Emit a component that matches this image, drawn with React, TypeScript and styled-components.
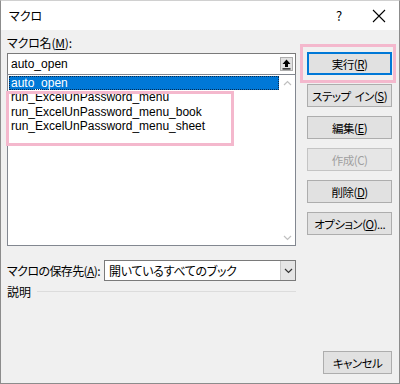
import React from "react";
import styled, { createGlobalStyle } from "styled-components";

const Global = createGlobalStyle`
  html, body { margin: 0; padding: 0; background: #f0f0f0; }
  body {
    font-family: "Noto Sans CJK JP", "Noto Sans", sans-serif;
    font-size: 12px;
    color: #000;
    font-feature-settings: "palt";
    white-space: nowrap;
  }
  * { box-sizing: border-box; }
`;

const Window = styled.div`
  width: 400px;
  height: 384px;
  border: 1px solid #8c8c8c;
  border-top-color: #d0d0d0;
  background: #f0f0f0;
  display: flex;
  flex-direction: column;
`;

const TitleBar = styled.div`
  height: 29px;
  background: #fff;
  display: flex;
  align-items: center;
  padding-left: 8px;
`;

const Title = styled.div`
  flex: 1;
  font-size: 12px;
`;

const Ctl = styled.div`
  width: 40px;
  height: 29px;
  display: flex;
  align-items: center;
  justify-content: center;
  font-size: 13px;
`;

const Body = styled.div`
  flex: 1;
  display: flex;
  padding: 5px 7px 9px 6px;
  gap: 11px;
`;

const Left = styled.div`
  width: 290px;
  display: flex;
  flex-direction: column;
`;

const Label = styled.div`
  height: 16px;
  line-height: 16px;
  margin-bottom: 2px;
  letter-spacing: -0.2px;
`;

const TextBox = styled.div`
  height: 21px;
  background: #fff;
  border: 1px solid #7a7a7a;
  border-bottom: none;
  display: flex;
  align-items: center;
  padding-left: 3px;
  padding-right: 2px;
`;

const TextVal = styled.span`
  flex: 1;
  font-family: "Liberation Sans", Arial, sans-serif;
  font-size: 12px;
`;

const ArrowBtn = styled.div`
  width: 13px;
  height: 14px;
  background: #e1e1e1;
  border: 1px solid #adadad;
  display: flex;
  align-items: center;
  justify-content: center;
`;

const ListBox = styled.div`
  position: relative;
  height: 172px;
  background: #fff;
  border: 1px solid #828790;
  display: flex;
`;

const Rows = styled.div`
  flex: 1;
  padding: 1px 0 0 1px;
`;

const Row = styled.div<{ $sel?: boolean }>`
  height: 14.4px;
  line-height: 14.4px;
  padding-left: 2px;
  font-family: "Liberation Sans", Arial, sans-serif;
  font-size: 12px;
  background: ${(p) => (p.$sel ? "#0078d7" : "transparent")};
  color: ${(p) => (p.$sel ? "#fff" : "#000")};
  outline: ${(p) => (p.$sel ? "1px dotted #0b2a4a" : "none")};
  outline-offset: -1px;
`;

const Scroll = styled.div`
  width: 16px;
  background: #fff;
  display: flex;
  flex-direction: column;
  justify-content: space-between;
  align-items: center;
  padding: 5px 0 4px;
`;

const Highlight = styled.div`
  position: absolute;
  left: -2px;
  top: 16px;
  width: 228px;
  height: 55px;
  border: 3px solid #f4b8cd;
  pointer-events: none;
`;

const ComboRow = styled.div`
  display: flex;
  align-items: center;
  margin-top: 14px;
  height: 21px;
`;

const ComboLabel = styled.div`
  width: 97px;
  letter-spacing: -0.6px;
`;

const Combo = styled.div`
  flex: 1;
  height: 21px;
  background: #fff;
  border: 1px solid #7a7a7a;
  display: flex;
  align-items: center;
  padding-left: 4px;
`;

const ComboText = styled.div`
  flex: 1;
  letter-spacing: -0.3px;
`;

const ComboBtn = styled.div`
  width: 15px;
  height: 19px;
  background: #e5e5e5;
  border-left: 1px solid #c8c8c8;
  display: flex;
  align-items: center;
  justify-content: center;
`;

const DescRow = styled.div`
  display: flex;
  align-items: center;
  gap: 6px;
  margin-top: 2px;
  height: 17px;
`;

const Rule = styled.div`
  flex: 1;
  height: 1px;
  background: #dcdcdc;
`;

const Right = styled.div`
  width: 85px;
  display: flex;
  flex-direction: column;
  padding-top: 17px;
`;

const Button = styled.div<{ $def?: boolean; $dis?: boolean }>`
  height: 23px;
  margin-bottom: 9px;
  background: ${(p) => (p.$dis ? "#e6e6e6" : "#e1e1e1")};
  border: ${(p) => (p.$def ? "2px solid #0078d7" : p.$dis ? "1px solid #c4c4c4" : "1px solid #adadad")};
  color: ${(p) => (p.$dis ? "#a0a0a0" : "#000")};
  display: flex;
  align-items: center;
  justify-content: center;
  font-size: 11.5px;
  letter-spacing: -0.5px;
`;

const Gap = styled.span`
  display: inline-block;
  width: 4px;
`;

const DefWrap = styled.div`
  position: relative;
`;

const DefHighlight = styled.div`
  position: absolute;
  left: -7px;
  top: -8px;
  right: -4px;
  bottom: 1px;
  border: 3px solid #f4b8cd;
  pointer-events: none;
`;

const Spacer = styled.div`
  flex: 1;
`;

const CancelBtn = styled(Button)`
  margin-left: 16px;
  margin-bottom: 0;
`;

const Chevron = ({ up }: { up?: boolean }) => (
  <svg width="9" height="6" viewBox="0 0 9 6">
    <path
      d={up ? "M1 5 L4.5 1.5 L8 5" : "M1 1 L4.5 4.5 L8 1"}
      fill="none"
      stroke="#c0c0c0"
      strokeWidth="1.2"
    />
  </svg>
);

export default function App() {
  return (
    <>
      <Global />
      <Window>
        <TitleBar>
          <Title>マクロ</Title>
          <Ctl>?</Ctl>
          <Ctl>
            <svg width="14" height="14" viewBox="0 0 14 14">
              <path d="M1 1 L13 13 M13 1 L1 13" stroke="#000" strokeWidth="1.1" />
            </svg>
          </Ctl>
        </TitleBar>
        <Body>
          <Left>
            <Label>
              マクロ名(<u>M</u>):
            </Label>
            <TextBox>
              <TextVal>auto_open</TextVal>
              <ArrowBtn>
                <svg width="9" height="11" viewBox="0 0 9 11">
                  <path d="M4.5 0.5 L8.5 5 L6 5 L6 8 L3 8 L3 5 L0.5 5 Z" fill="#000" />
                  <rect x="0.5" y="9.3" width="8" height="1.2" fill="#000" />
                </svg>
              </ArrowBtn>
            </TextBox>
            <ListBox>
              <Rows>
                <Row $sel>auto_open</Row>
                <Row>run_ExcelUnPassword_menu</Row>
                <Row>run_ExcelUnPassword_menu_book</Row>
                <Row>run_ExcelUnPassword_menu_sheet</Row>
              </Rows>
              <Scroll>
                <Chevron up />
                <Chevron />
              </Scroll>
              <Highlight />
            </ListBox>
            <ComboRow>
              <ComboLabel>
                マクロの保存先(<u>A</u>):
              </ComboLabel>
              <Combo>
                <ComboText>開いているすべてのブック</ComboText>
                <ComboBtn>
                  <svg width="9" height="6" viewBox="0 0 9 6">
                    <path d="M1 1 L4.5 4.5 L8 1" fill="none" stroke="#333" strokeWidth="1.2" />
                  </svg>
                </ComboBtn>
              </Combo>
            </ComboRow>
            <DescRow>
              <span>説明</span>
              <Rule />
            </DescRow>
          </Left>
          <Right>
            <DefWrap>
              <Button $def>
                実行(<u>R</u>)
              </Button>
              <DefHighlight />
            </DefWrap>
            <Button>
              ステップ<Gap />イン(<u>S</u>)
            </Button>
            <Button>
              編集(<u>E</u>)
            </Button>
            <Button $dis>作成(C)</Button>
            <Button>
              削除(<u>D</u>)
            </Button>
            <Button>
              オプション(<u>O</u>)...
            </Button>
            <Spacer />
            <CancelBtn>キャンセル</CancelBtn>
          </Right>
        </Body>
      </Window>
    </>
  );
}
